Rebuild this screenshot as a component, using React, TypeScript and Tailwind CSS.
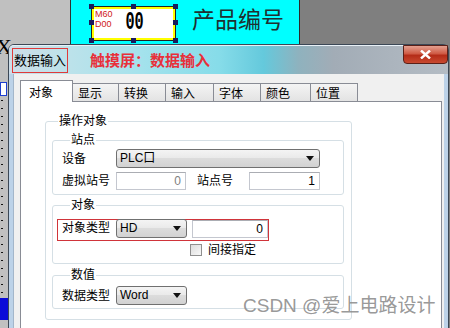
import React from "react";

const FONT = "font-['Liberation_Sans','Noto_Sans_CJK_SC',sans-serif]";

function Arrow() {
  return (
    <svg width="8" height="5" viewBox="0 0 8 5">
      <path d="M0 0H8L4 5Z" fill="#111" />
    </svg>
  );
}

function Select({ label, className }: { label: string; className: string }) {
  return (
    <div
      className={`relative flex items-center justify-between h-[19px] border border-[#707070] rounded-[3px] bg-[linear-gradient(#f4f4f4,#e9e9e9_50%,#dcdcdc_50%,#d2d2d2)] pl-[3px] pr-[5px] text-[12px] leading-[17px] text-black ${className}`}
    >
      <span>{label}</span>
      <Arrow />
    </div>
  );
}

function Input({ value, className }: { value: string; className: string }) {
  return (
    <div
      className={`relative h-[18px] border border-[#c4c7cf] border-t-[#abadb3] bg-white text-right pr-[4px] text-[12px] leading-[16px] ${className}`}
    >
      {value}
    </div>
  );
}

function Tab({ label, className }: { label: string; className: string }) {
  return (
    <div
      className={`h-[19px] border-t border-r border-[#898c95] bg-[linear-gradient(#f4f4f4,#e2e2e2)] pl-[5px] pt-[3px] text-[12px] leading-[15px] text-black ${className}`}
    >
      {label}
    </div>
  );
}

export default function App() {
  const dots = Array.from({ length: 26 }, (_, i) => 100 + i * 8);
  return (
    <div className={`relative w-[450px] h-[328px] overflow-hidden ${FONT}`}>
      {/* desktop background */}
      <div className="flex h-[328px]">
        <div className="w-[70px] bg-[#c0c0c0]" />
        <div className="w-[1px] bg-[#303030]" />
        <div className="w-[228px] bg-[#00ffff]" />
        <div className="w-[1px] bg-[#2a2a2a]" />
        <div className="flex-1 bg-[#7f7f7f]" />
      </div>

      {/* left strip items */}
      <div className="absolute left-[-4px] top-[36px] font-['Liberation_Serif',serif] text-[22px] leading-[22px] text-black">
        X
      </div>
      <div className="absolute left-0 top-[82px] w-[7px] h-[14px] border border-[#1d3fd0] bg-white" />
      <svg className="absolute left-0 top-0" width="8" height="328">
        {dots.map((y) => (
          <rect key={y} x="1" y={y} width="2" height="1" fill="#111" />
        ))}
        <rect x="0" y="298" width="8" height="22" fill="#0a0ad8" />
      </svg>

      {/* widget on canvas */}
      <div className="absolute left-[91px] top-[6px] w-[85px] h-[35px] border border-[#222] bg-[#ffff00] p-[2px]">
        <div className="relative h-full w-full bg-white">
          <div className="absolute left-[1px] top-[1px] text-[9px] leading-[9px] text-[#d02020] font-['Liberation_Sans',sans-serif]">
            M60
          </div>
          <div className="absolute left-[1px] top-[11px] text-[9px] leading-[9px] text-[#d02020] font-['Liberation_Sans',sans-serif]">
            D00
          </div>
          <div className="absolute left-[31px] top-[6px] font-['Liberation_Mono',monospace] font-bold text-[16px] leading-[16px] scale-y-[1.6] scale-x-[0.95] text-black">
            00
          </div>
        </div>
        <div className="absolute left-[-3px] top-[-3px] w-[5px] h-[5px] bg-[#1a1a5c]" />
        <div className="absolute left-[39px] top-[-3px] w-[5px] h-[5px] bg-[#1a1a5c]" />
        <div className="absolute right-[-3px] top-[-3px] w-[5px] h-[5px] bg-[#1a1a5c]" />
        <div className="absolute left-[-3px] top-[13px] w-[5px] h-[5px] bg-[#1a1a5c]" />
        <div className="absolute right-[-3px] top-[13px] w-[5px] h-[5px] bg-[#1a1a5c]" />
        <div className="absolute left-[-3px] bottom-[-3px] w-[5px] h-[5px] bg-[#1a1a5c]" />
        <div className="absolute left-[39px] bottom-[-3px] w-[5px] h-[5px] bg-[#1a1a5c]" />
        <div className="absolute right-[-3px] bottom-[-3px] w-[5px] h-[5px] bg-[#1a1a5c]" />
      </div>
      <div className="absolute left-[192px] top-[5px] text-[23px] leading-[30px] text-[#1f3030]">
        产品编号
      </div>

      {/* dialog window */}
      <div className="absolute left-[8px] top-[44px] w-[441px] h-[300px] border border-[#3c4856] rounded-t-[6px] bg-[#bcd2e8] flex flex-col">
        {/* title bar */}
        <div className="relative flex items-start h-[29px] rounded-t-[5px] bg-[linear-gradient(90deg,#cddde8_0%,#bfe2ea_12%,#a4e2ec_30%,#86dce9_48%,#64c9dc_58%,#8fb2be_66%,#a2acb6_74%,#b4bcc4_100%)] border-t border-[#e8f0f6]">
          <div className="ml-[3px] mt-[2px] w-[56px] h-[25px] border border-[#e03a3a] pl-[1px] text-[13px] leading-[23px] text-black">
            数据输入
          </div>
          <div className="ml-[22px] mt-[6px] text-[15px] leading-[17px] font-bold text-[#e8303a]">
            触摸屏：数据输入
          </div>
          <div className="ml-auto mt-[-1px] w-[45px] h-[19px] rounded-b-[4px] border border-[#5a2018] bg-[linear-gradient(#e4a090,#cf5a44_45%,#b42c18_55%,#c84a30)] flex items-center justify-center">
            <svg width="11" height="9" viewBox="0 0 11 9">
              <path d="M1 0.5L10 8.5M10 0.5L1 8.5" stroke="#fff" strokeWidth="2.4" />
            </svg>
          </div>
        </div>

        {/* body */}
        <div className="flex-1 mx-[4px] bg-[#f0f0f0] border-l border-[#a3b6ca] pl-[6px] pt-[6px] flex flex-col text-black">
          {/* tabs */}
          <div className="flex items-end h-[22px] -mb-px">
            <div className="relative z-10 w-[53px] h-[22px] bg-white border-t border-l border-r border-[#898c95] pl-[8px] pt-[5px] text-[12px] leading-[14px]">
              对象
            </div>
            <Tab label="显示" className="w-[46px]" />
            <Tab label="转换" className="w-[47px]" />
            <Tab label="输入" className="w-[48px]" />
            <Tab label="字体" className="w-[47px]" />
            <Tab label="颜色" className="w-[50px]" />
            <Tab label="位置" className="w-[47px]" />
          </div>

          {/* panel */}
          <div className="w-[422px] flex-1 bg-white border border-[#898c95] pt-[11px] pl-[24px]">
            <fieldset className="w-[307px] border border-[#d5dfe5] rounded-[3px] px-[6px] pb-[10px]">
              <legend className="ml-[6px] px-[1px] text-[12px] leading-[16px]">操作对象</legend>

              <fieldset className="w-[292px] mt-[3px] border border-[#d5dfe5] rounded-[3px] pl-[9px] pt-[1px] pb-[4px] flex flex-col gap-[4px]">
                <legend className="ml-[8px] px-[1px] text-[12px] leading-[16px]">站点</legend>
                <div className="flex items-center">
                  <div className="w-[54px] text-[12px] leading-[16px]">设备</div>
                  <Select label="PLC口" className="w-[204px]" />
                </div>
                <div className="flex items-center">
                  <div className="w-[54px] text-[12px] leading-[16px]">虚拟站号</div>
                  <Input value="0" className="w-[70px] text-[#808080]" />
                  <div className="ml-[11px] w-[52px] text-[12px] leading-[16px]">站点号</div>
                  <Input value="1" className="w-[71px] text-black" />
                </div>
              </fieldset>

              <fieldset className="w-[292px] mt-[2px] border border-[#d5dfe5] rounded-[3px] pl-[9px] pt-[5px] pb-[5px]">
                <legend className="ml-[8px] px-[1px] text-[12px] leading-[16px]">对象</legend>
                <div className="relative flex items-center">
                  <div className="absolute left-[-5px] top-[1px] w-[212px] h-[22px] border border-[#d0343a]" />
                  <div className="relative w-[54px] text-[12px] leading-[16px]">对象类型</div>
                  <Select label="HD" className="w-[71px]" />
                  <Input value="0" className="ml-[5px] mt-[2px] w-[76px] h-[17px] text-black" />
                </div>
                <div className="flex items-center mt-[4px] ml-[128px]">
                  <div className="w-[12px] h-[12px] border border-[#8f8f8f] bg-[linear-gradient(135deg,#dcdcdc,#f8f8f8)]" />
                  <div className="ml-[6px] text-[12px] leading-[16px]">间接指定</div>
                </div>
              </fieldset>

              <fieldset className="w-[292px] mt-[3px] border border-[#d5dfe5] rounded-[3px] pl-[9px] pt-[3px] pb-[3px]">
                <legend className="ml-[8px] px-[1px] text-[12px] leading-[16px]">数值</legend>
                <div className="flex items-center">
                  <div className="w-[54px] text-[12px] leading-[16px]">数据类型</div>
                  <Select label="Word" className="w-[71px]" />
                </div>
              </fieldset>
            </fieldset>
          </div>
        </div>
      </div>

      {/* watermark */}
      <div className="absolute left-[243px] top-[294px] text-[19px] leading-[24px] text-[#8c8c8c]/90 whitespace-nowrap">
        CSDN @爱上电路设计
      </div>
    </div>
  );
}
